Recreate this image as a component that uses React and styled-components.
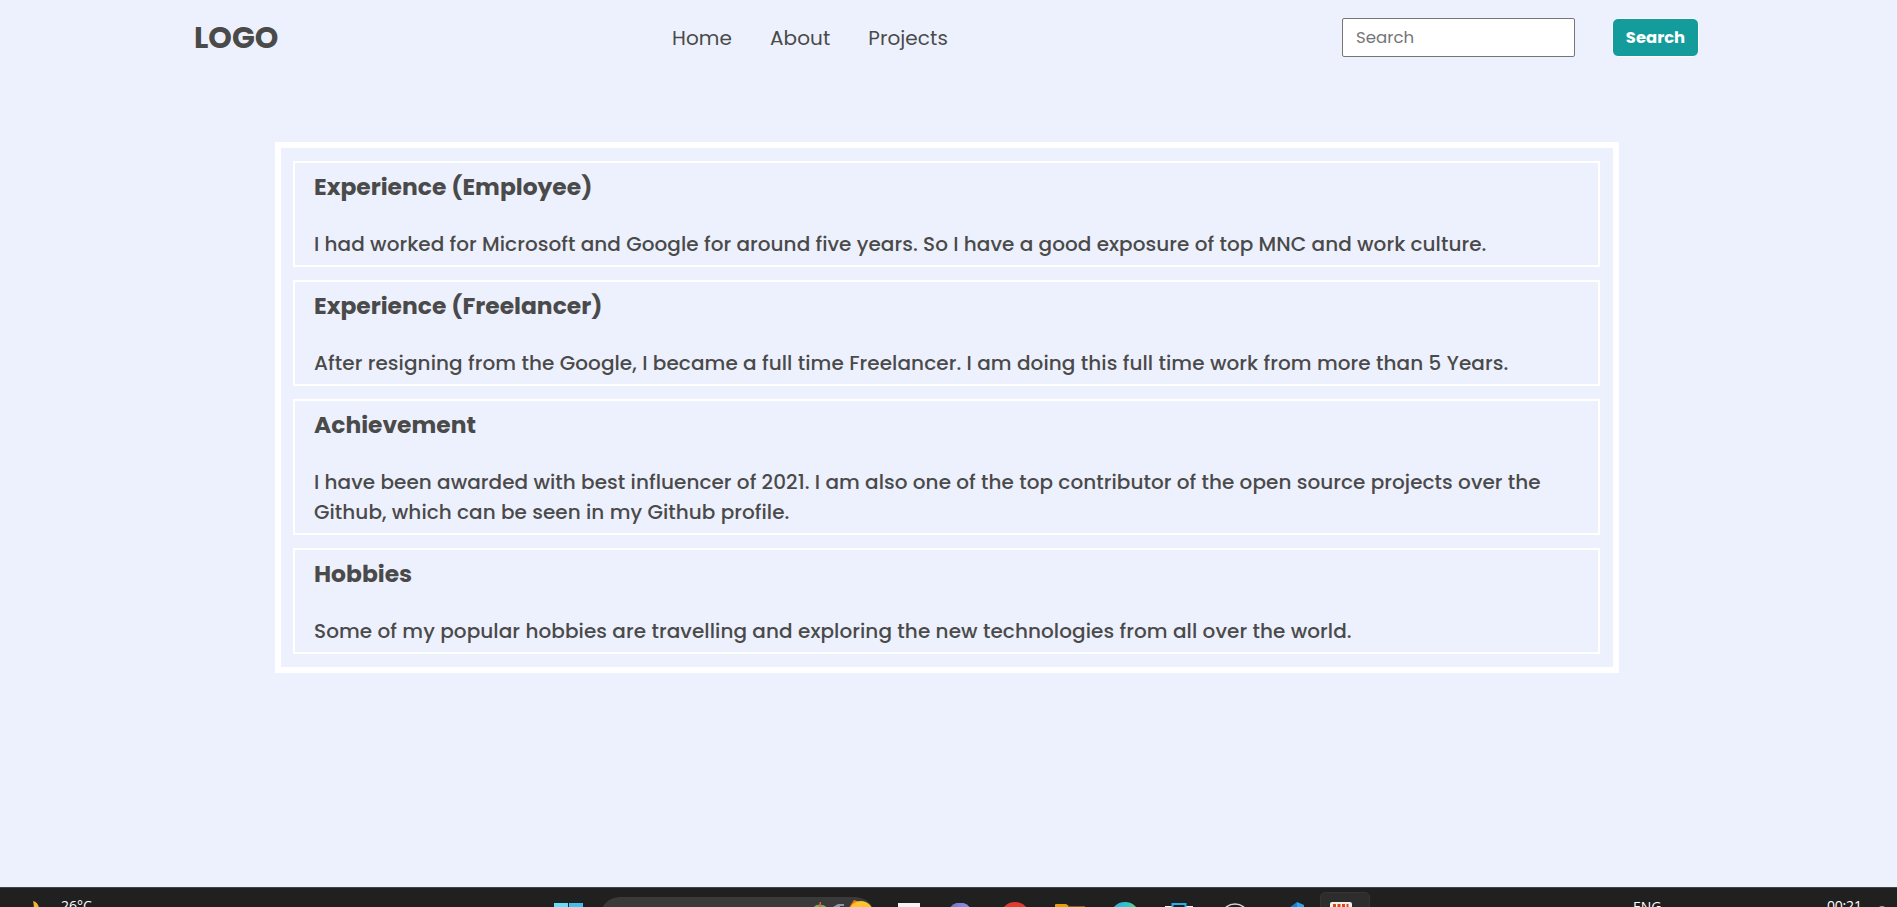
import React from "react";
import styled, { createGlobalStyle } from "styled-components";

const GlobalStyle = createGlobalStyle`
  *, *::before, *::after { box-sizing: border-box; }
  body {
    margin: 0;
    background: #edf1fd;
    color: #4a4a4a;
    font-family: Poppins, Inter, "Open Sans", sans-serif;
    overflow: hidden;
  }
`;

const Page = styled.div`
  height: 100vh;
  display: flex;
  flex-direction: column;
`;

const Header = styled.header`
  height: 75px;
  padding: 0 198px 0 194px;
  display: grid;
  grid-template-columns: 478px 1fr auto;
  align-items: center;
`;

const Logo = styled.div`
  font-size: 30px;
  font-weight: 700;
  line-height: 45px;
`;

const Nav = styled.nav`
  display: flex;
  gap: 38px;
`;

const NavLink = styled.a`
  font-size: 20px;
  line-height: 30px;
  letter-spacing: 0.08px;
  color: inherit;
  text-decoration: none;
`;

const SearchForm = styled.form`
  display: flex;
  align-items: center;
  gap: 37px;
`;

const SearchInput = styled.input`
  width: 233px;
  height: 39px;
  padding: 0 13px;
  border: 1px solid #767676;
  border-radius: 2px;
  background: #fff;
  font: 400 16.600px Poppins, Inter, sans-serif;
  &::placeholder { color: #757575; }
`;

const SearchButton = styled.button`
  width: 87px;
  height: 39px;
  padding: 0;
  border: 1px solid #fff;
  border-radius: 6px;
  background: #139c9b;
  color: #fff;
  font: 700 16.400px Poppins, Inter, sans-serif;
`;

const Main = styled.main`
  flex: 1;
  padding: 67px 278px 0 275px;
`;

const Panel = styled.section`
  border: 6px solid #fff;
  padding: 13px 13px 13px 12px;
  display: flex;
  flex-direction: column;
  gap: 13px;
`;

const Card = styled.article`
  border: 2px solid #fff;
  padding: 6px 18px 6px 19px;
`;

const CardTitle = styled.h3`
  margin: 0 0 24px;
  font-size: 23.4px;
  font-weight: 700;
  line-height: 36px;
`;

const CardText = styled.p`
  margin: 0;
  font-size: 20px;
  font-weight: 500;
  line-height: 30px;
  letter-spacing: ${(p) => p.$tracking}px;
`;

const Taskbar = styled.footer`
  height: 20px;
  flex: none;
  display: flex;
  align-items: flex-start;
  overflow: hidden;
  background: #202020;
  border-top: 1px solid #414546;
`;

const TaskItem = styled.div`
  flex: none;
  width: ${(p) => p.$w}px;
  margin-left: ${(p) => p.$gap}px;
  padding-top: ${(p) => p.$top}px;
  svg { display: block; }
`;

const TaskText = styled(TaskItem)`
  color: #fff;
  font: 400 14px/20px "Open Sans", sans-serif;
  letter-spacing: ${(p) => p.$tracking || 0}px;
  white-space: nowrap;
`;

const SearchPill = styled.div`
  flex: none;
  width: 275px;
  height: 40px;
  margin: 9px 0 0 17px;
  border-radius: 20px;
  background: #3a3a3a;
  display: flex;
  justify-content: flex-end;
  overflow: hidden;
`;

const ActiveTile = styled.div`
  flex: none;
  width: 50px;
  height: 48px;
  margin: 4px 0 0 15px;
  padding: 9px 0 0 9px;
  border: 1px solid #353535;
  border-radius: 5px;
  background: #2d2d2d;
  svg { display: block; }
`;

const links = ["Home", "About", "Projects"];

const cards = [
  {
    title: "Experience (Employee)",
    tracking: 0.053,
    text: "I had worked for Microsoft and Google for around five years. So I have a good exposure of top MNC and work culture.",
  },
  {
    title: "Experience (Freelancer)",
    tracking: 0.075,
    text: "After resigning from the Google, I became a full time Freelancer. I am doing this full time work from more than 5 Years.",
  },
  {
    title: "Achievement",
    tracking: 0.05,
    text: "I have been awarded with best influencer of 2021. I am also one of the top contributor of the open source projects over the Github, which can be seen in my Github profile.",
  },
  {
    title: "Hobbies",
    tracking: 0.075,
    text: "Some of my popular hobbies are travelling and exploring the new technologies from all over the world.",
  },
];

const Moon = () => (
  <svg width="10" height="14"><path d="M1 0 Q6 1 7 7 L6 14 H0 Q3 6 1 0Z" fill="#f3b62e" /></svg>
);

const WindowsLogo = () => (
  <svg width="29" height="29">
    <path d="M0 0h14v14H0z" fill="#62e0fb" />
    <path d="M15 0h14v14H15z" fill="#3fc0ee" />
    <path d="M0 15h14v14H0zM15 15h14v14H15z" fill="#1f9ee6" />
  </svg>
);

const SearchArt = () => (
  <svg width="70" height="40">
    <circle cx="15" cy="17" r="9.500" fill="#6c9fa8" />
    <path d="M10 9 Q14 6 15 10 L14 14 H9Z M18 8 Q22 10 23 13 H17Z" fill="#76b82f" />
    <path d="M14.500 5h1.500v9h-1.500z" fill="#ee5b3a" />
    <path d="M28 10 L33 7 H39 V9 H35 V12 H28Z" fill="#8f98ad" />
    <path d="M43 12 L49 3 L55 5 L53 20 H43Z" fill="#f07a13" />
    <circle cx="56" cy="16" r="12" fill="#fdc32c" />
  </svg>
);

const TaskView = () => <svg width="22" height="20"><path d="M0 0h22v20H0z" fill="#f4f4f4" /></svg>;

const Chat = () => (
  <svg width="24" height="24">
    <defs><linearGradient id="chat"><stop stopColor="#7469c6" /><stop offset="1" stopColor="#8e9be4" /></linearGradient></defs>
    <circle cx="12" cy="12" r="12.500" fill="url(#chat)" />
  </svg>
);

const Chrome = () => <svg width="30" height="30"><circle cx="15" cy="15" r="15" fill="#e33b2e" /></svg>;

const Folder = () => (
  <svg width="30" height="24">
    <path d="M0 1Q0 0 1 0H11L14 2H30V24H0Z" fill="#e3a008" />
    <path d="M13 2H30V3H13Z" fill="#8a6206" />
  </svg>
);

const Edge = () => (
  <svg width="30" height="30">
    <defs><linearGradient id="edge"><stop stopColor="#28aee8" /><stop offset=".6" stopColor="#34c5c4" /><stop offset="1" stopColor="#6cdb60" /></linearGradient></defs>
    <circle cx="15" cy="15" r="15" fill="url(#edge)" />
  </svg>
);

const Store = () => (
  <svg width="28" height="24">
    <path d="M0 3h28v20H0z" fill="#f5f5f5" />
    <path d="M7 3h14v2H7z" fill="#202020" />
    <path d="M7.500 5V1H20.500V5" fill="none" stroke="#1fb4ef" strokeWidth="2" />
  </svg>
);

const Ring = () => <svg width="24" height="24"><ellipse cx="12" cy="10" rx="11.500" ry="9" fill="none" stroke="#d4d4d4" strokeWidth="1.500" /></svg>;

const Code = () => (
  <svg width="16" height="24">
    <path d="M0 6 L8 0 V24 H0Z" fill="#1583cf" />
    <path d="M8 0 L15 3 V24 H8Z" fill="#2ca5ef" />
  </svg>
);

const Recorder = () => (
  <svg width="22" height="24">
    <rect width="22" height="24" rx="2" fill="#f4efed" />
    <path d="M3 2h3v4H3zM7.500 2h3v4h-3zM12 2h3v4h-3zM16.500 2h2v4h-2z" fill="#df4712" />
  </svg>
);

const Bell = () => <svg width="10" height="10"><circle cx="5" cy="5" r="5" fill="#aaa" /></svg>;

export default function App() {
  return (
    <Page>
      <GlobalStyle />
      <Header>
        <Logo>LOGO</Logo>
        <Nav>
          {links.map((label) => (
            <NavLink key={label}>{label}</NavLink>
          ))}
        </Nav>
        <SearchForm>
          <SearchInput placeholder="Search" />
          <SearchButton type="button">Search</SearchButton>
        </SearchForm>
      </Header>
      <Main>
        <Panel>
          {cards.map((card) => (
            <Card key={card.title}>
              <CardTitle>{card.title}</CardTitle>
              <CardText $tracking={card.tracking}>{card.text}</CardText>
            </Card>
          ))}
        </Panel>
      </Main>
      <Taskbar>
        <TaskItem $gap={32} $w={10} $top={13}><Moon /></TaskItem>
        <TaskText $gap={19} $w={40} $top={8}>26°C</TaskText>
        <TaskItem $gap={453} $w={29} $top={15}><WindowsLogo /></TaskItem>
        <SearchPill><SearchArt /></SearchPill>
        <TaskItem $gap={23} $w={22} $top={15}><TaskView /></TaskItem>
        <TaskItem $gap={28} $w={24} $top={15}><Chat /></TaskItem>
        <TaskItem $gap={28} $w={30} $top={14}><Chrome /></TaskItem>
        <TaskItem $gap={25} $w={30} $top={16}><Folder /></TaskItem>
        <TaskItem $gap={25} $w={30} $top={14}><Edge /></TaskItem>
        <TaskItem $gap={25} $w={28} $top={15}><Store /></TaskItem>
        <TaskItem $gap={30} $w={24} $top={15}><Ring /></TaskItem>
        <TaskItem $gap={42} $w={16} $top={14}><Code /></TaskItem>
        <ActiveTile><Recorder /></ActiveTile>
        <TaskText $gap={263} $w={32} $top={9}>ENG</TaskText>
        <TaskText $gap={162} $w={40} $top={8} $tracking={-0.2}>00:21</TaskText>
        <TaskItem $gap={10} $w={10} $top={18}><Bell /></TaskItem>
      </Taskbar>
    </Page>
  );
}
